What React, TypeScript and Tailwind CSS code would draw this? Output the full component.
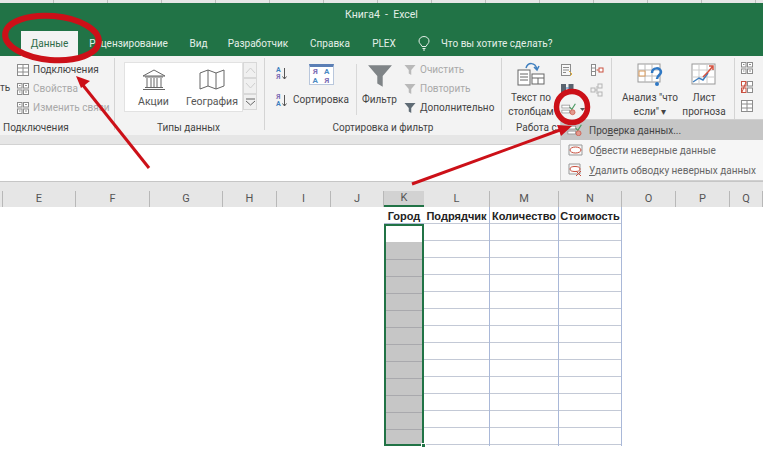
import type { ReactNode } from "react";

const TABS = [
  { label: "Рецензирование", w: "w-[101px]" },
  { label: "Вид", w: "w-[39px]" },
  { label: "Разработчик", w: "w-[80px]" },
  { label: "Справка", w: "w-[64px]" },
  { label: "PLEX", w: "w-[44px]" },
];

const HEADERS = [
  { label: "E", w: "w-[73px]" },
  { label: "F", w: "w-[74px]" },
  { label: "G", w: "w-[73px]" },
  { label: "H", w: "w-[54px]" },
  { label: "I", w: "w-[54px]" },
  { label: "J", w: "w-[53px]" },
];

const HEADERS_RIGHT = [
  { label: "L", w: "w-[66px]" },
  { label: "M", w: "w-[69px]" },
  { label: "N", w: "w-[63px]" },
  { label: "O", w: "w-[54px]" },
  { label: "P", w: "w-[54px]" },
  { label: "Q", w: "w-[33px]" },
];

const TABLE = [
  { title: "Подрядчик", w: "w-[66px]" },
  { title: "Количество", w: "w-[69px]" },
  { title: "Стоимость", w: "w-[63px]" },
];

const ROWS = Array.from({ length: 13 }, (_, i) => i);

function ValidationIcon({ size = 22 }: { size?: number }) {
  return (
    <svg className="block" width={size} height={size * 0.8} viewBox="0 0 22 18" fill="none">
      <rect x="1" y="3" width="11" height="4" fill="#fff" stroke="#8a8a8a" />
      <rect x="1" y="10" width="11" height="4" fill="#fff" stroke="#8a8a8a" />
      <path d="M12 6l3 3 5-8" stroke="#4c9a63" strokeWidth="1.6" />
      <circle cx="16" cy="13" r="3.5" fill="#e39a8f" stroke="#c9503f" />
    </svg>
  );
}

function SmallGlyph({ kind }: { kind: number }) {
  return (
    <svg className="block" width="14" height="14" viewBox="0 0 14 14" fill="none" stroke="#8c8c8c">
      {kind === 0 && (
        <>
          <rect x="1.5" y="1.5" width="9" height="11" fill="#f8f8f8" />
          <path d="M3 4.5h6M3 7h6M3 9.5h3" />
          <path d="M9 8l3 3-2 2" stroke="#e0b040" />
        </>
      )}
      {kind === 1 && (
        <>
          <rect x="1.5" y="3.5" width="4" height="8" fill="#59636e" stroke="#59636e" />
          <rect x="9" y="3.5" width="4" height="8" fill="#59636e" stroke="#59636e" />
          <path d="M6 7h3" stroke="#3f7fbf" />
        </>
      )}
      {kind === 2 && (
        <>
          <rect x="1.5" y="1.5" width="4" height="11" fill="#fff" />
          <path d="M1.5 5h4M1.5 8.5h4" />
          <path d="M6.5 7h2" stroke="#c9503f" />
          <rect x="9" y="5" width="4" height="4" fill="#fff" stroke="#c9503f" />
        </>
      )}
      {kind === 3 && (
        <>
          <rect x="1" y="5" width="4" height="4" stroke="#b5b5b5" />
          <rect x="8" y="1" width="4" height="4" stroke="#b5b5b5" />
          <rect x="8" y="9" width="4" height="4" stroke="#b5b5b5" />
          <path d="M5 7h2M7 3v8" stroke="#b5b5b5" />
        </>
      )}
      {kind === 4 && (
        <>
          <rect x="1.5" y="1.5" width="4.5" height="4.5" fill="#fff" />
          <rect x="7.5" y="1.5" width="5" height="4.5" fill="#fff" />
          <rect x="1.5" y="8" width="4.5" height="4.5" fill="#fff" />
          <rect x="7.5" y="8" width="5" height="4.5" fill="#fff" />
          <path d="M3 3.5h1.5M9 3.5h2M3 10h1.5M9 10h2" />
        </>
      )}
      {kind === 5 && (
        <>
          <rect x="1.5" y="1.5" width="4.5" height="4.5" fill="#fff" stroke="#c9503f" />
          <rect x="7.5" y="1.5" width="5" height="4.5" fill="#fff" />
          <rect x="1.5" y="8" width="4.5" height="4.5" fill="#fff" stroke="#c9503f" />
          <rect x="7.5" y="8" width="5" height="4.5" fill="#fff" />
          <path d="M2 12L6 2" stroke="#c9503f" />
        </>
      )}
      {kind === 6 && (
        <>
          <rect x="1.5" y="1.5" width="11" height="11" fill="#fff" />
          <path d="M7 1.5v11M1.5 5h11M1.5 9h11" />
        </>
      )}
    </svg>
  );
}

function FilterIcon({ size, color }: { size: number; color: string }) {
  return (
    <svg className="block" width={size} height={size} viewBox="0 0 24 24" fill={color}>
      <path d="M1 2h22L14.5 12v10l-5-3v-7z" />
    </svg>
  );
}

function SortGlyph({ top, bottom }: { top: string; bottom: string }) {
  return (
    <div className="flex h-[14px] items-center gap-[1px] text-[7px] font-bold leading-[7px]">
      <div className="flex flex-col items-center">
        <span className={top === "А" ? "text-[#3f7fbf]" : "text-[#7c6db5]"}>{top}</span>
        <span className={bottom === "А" ? "text-[#3f7fbf]" : "text-[#7c6db5]"}>{bottom}</span>
      </div>
      <svg className="block" width="5" height="12" viewBox="0 0 5 12" fill="none" stroke="#555">
        <path d="M2.5 0v11M0.5 8.500l2 2.500 2-2.500" />
      </svg>
    </div>
  );
}

function CommandLine({ icon, label, muted }: { icon: ReactNode; label: string; muted?: boolean }) {
  return (
    <div className={`flex h-[19px] items-center gap-[3px] whitespace-nowrap ${muted ? "text-[#a9a9a9]" : "text-[#444]"}`}>
      <span className="flex w-[15px] justify-center">{icon}</span>
      {label}
    </div>
  );
}

function Group({ w, label, children, labelClass }: { w: string; label: string; children: ReactNode; labelClass?: string }) {
  return (
    <div className={`${w} mb-[5px] mt-[2px] flex shrink-0 flex-col border-r border-[#d4d4d4]`}>
      <div className="flex h-[63px] shrink-0">{children}</div>
      <div className={`h-[14px] shrink-0 leading-[14px] text-[#444] ${labelClass ?? "text-center"}`}>{label}</div>
    </div>
  );
}

function ScrollButton({ d, dim }: { d: string; dim?: boolean }) {
  return (
    <div className="flex h-[16px] items-center justify-center border border-[#d8d8d8] bg-[#f0f0f0]">
      <svg className="block" width="11" height="8" viewBox="0 0 11 8" fill="none" stroke={dim ? "#cfcfcf" : "#666"}>
        <path d={d} />
      </svg>
    </div>
  );
}

export default function App() {
  return (
    <div className="relative h-[458px] w-[763px] overflow-hidden bg-white font-['Roboto',sans-serif] text-[10px]">
      {/* Полоска сверху */}
      <div className="flex h-[3px] bg-[#e6e6e6]">
        {Array.from({ length: 15 }, (_, i) => (
          <div key={i} className="h-full w-[54px] shrink-0 border-r border-[#bdbdbd]" />
        ))}
      </div>

      {/* Заголовок */}
      <div className="h-[28px] bg-[#217346] pt-[4px] text-center text-[10.5px] leading-[16px] text-[#e4efe8]">
        Книга4 &nbsp;-&nbsp; Excel
      </div>

      {/* Вкладки */}
      <div className="flex h-[25px] items-stretch bg-[#217346] text-[#e4efe8]">
        <div className="w-[21px]" />
        <div className="flex w-[57px] items-center justify-center bg-[#f3f3f3] text-[#2f6b49]">Данные</div>
        {TABS.map((t) => (
          <div key={t.label} className={`${t.w} flex items-center justify-center`}>
            {t.label}
          </div>
        ))}
        <div className="ml-[9px] flex w-[18px] items-center justify-center">
          <svg className="block" width="12" height="15" viewBox="0 0 12 15" fill="none" stroke="#e4efe8">
            <path d="M4 10.5C3 8 1 7.5 1 5a5 4.5 0 0 1 10 0c0 2.5-2 3-3 5.5zM4.5 12.5h3M5 14h2" />
          </svg>
        </div>
        <div className="ml-[8px] flex items-center whitespace-nowrap">Что вы хотите сделать?</div>
      </div>

      {/* Лента */}
      <div className="flex h-[79px] bg-[#f3f3f3]">
        <Group w="w-[115px]" label="Подключения" labelClass="pl-[3px]">
          <div className="flex w-[15px] items-center pb-[5px] text-[#444]">ть</div>
          <div className="pt-[2px]">
            <CommandLine label="Подключения" icon={<SmallGlyph kind={6} />} />
            <CommandLine label="Свойства" muted icon={<SmallGlyph kind={4} />} />
            <CommandLine label="Изменить связи" muted icon={<SmallGlyph kind={4} />} />
          </div>
        </Group>

        <Group w="w-[150px]" label="Типы данных" labelClass="text-center pr-[2px]">
          <div className="ml-[9px] mt-[4px] flex h-[50px] w-[119px] border border-[#e2e2e2] bg-white">
            <div className="flex w-[57px] flex-col items-center pt-[5px] text-[#555]">
              <svg className="block" width="26" height="23" viewBox="0 0 26 23" fill="none" stroke="#666">
                <path d="M2 8L13 2l11 6zM4 9h18M6 10v9M10 10v9M13 10v9M16 10v9M20 10v9M4 19.5h18M2 21.5h22" />
              </svg>
              <span className="mt-[3px] text-[10.5px]">Акции</span>
            </div>
            <div className="flex flex-1 flex-col items-center pt-[5px] text-[#555]">
              <svg className="block" width="26" height="23" viewBox="0 0 26 23" fill="none" stroke="#666">
                <path d="M1 5l8-3 8 3 8-3v16l-8 3-8-3-8 3zM9 2v16M17 5v16" />
              </svg>
              <span className="mt-[3px] text-[10.5px]">География</span>
            </div>
          </div>
          <div className="mt-[4px] flex w-[14px] flex-col">
            <ScrollButton dim d="M1 7l4.5-5L10 7" />
            <ScrollButton dim d="M1 1l4.5 5L10 1" />
            <ScrollButton d="M1 1h9M1 3l4.5 4L10 3" />
          </div>
        </Group>

        <Group w="w-[237px]" label="Сортировка и фильтр">
          <div className="ml-[11px] flex w-[15px] flex-col gap-[13px] pt-[9px]">
            <SortGlyph top="А" bottom="Я" />
            <SortGlyph top="Я" bottom="А" />
          </div>
          <div className="flex w-[60px] flex-col items-center pt-[6px] text-[#444]">
            <div className="grid h-[21px] w-[25px] grid-cols-2 border-x border-b border-t-[3px] border-x-[#b9c7dc] border-b-[#b9c7dc] border-t-[#5b7fb5] bg-white text-center text-[8px] font-bold leading-[9px] text-[#4d8bc4]">
              <span className="text-[#7c6db5]">Я</span>
              <span>А</span>
              <span>А</span>
              <span className="text-[#7c6db5]">Я</span>
            </div>
            <span className="mt-[7px] whitespace-nowrap">Сортировка</span>
          </div>
          <div className="my-[6px] ml-[5px] w-px bg-[#d8d8d8]" />
          <div className="flex w-[45px] flex-col items-center pt-[5px] text-[#444]">
            <FilterIcon size={26} color="#7f8487" />
            <span className="mt-[3px]">Фильтр</span>
          </div>
          <div className="pt-[2px]">
            <CommandLine label="Очистить" muted icon={<FilterIcon size={12} color="#b9b9b9" />} />
            <CommandLine label="Повторить" muted icon={<FilterIcon size={12} color="#b9b9b9" />} />
            <CommandLine label="Дополнительно" icon={<FilterIcon size={12} color="#5f6b75" />} />
          </div>
        </Group>

        <Group w="w-[110px]" label="Работа с" labelClass="pl-[14px]">
          <div className="flex w-[58px] flex-col items-center pt-[3px] text-center leading-[14px] text-[#444]">
            <svg className="block" width="28" height="25" viewBox="0 0 28 25" fill="none" stroke="#666">
              <rect x="1" y="9" width="12" height="15" fill="#fff" />
              <path d="M3 13h8M3 16h8M3 19h8" />
              <rect x="15" y="13" width="12" height="10" fill="#fff" />
              <path d="M15 17h12M21 17v6" />
              <path d="M9 7c2-6 9-6 11 1M17 6l3 3 2-4" stroke="#3f7fbf" strokeWidth="1.5" />
            </svg>
            <span className="mt-[5px] whitespace-nowrap">Текст по<br />столбцам</span>
          </div>
          <div className="flex w-[30px] flex-col pt-[5px]">
            <SmallGlyph kind={0} />
            <div className="mt-[4px]"><SmallGlyph kind={1} /></div>
            <div className="mt-[8px] flex items-center gap-[3px] pl-[1px]">
              <ValidationIcon size={16} />
              <svg className="block" width="5" height="3" viewBox="0 0 5 3" fill="#555"><path d="M0 0h5L2.5 3z" /></svg>
            </div>
          </div>
          <div className="flex w-[14px] flex-col pt-[5px]">
            <SmallGlyph kind={2} />
            <div className="mt-[6px]"><SmallGlyph kind={3} /></div>
          </div>
        </Group>

        <Group w="w-[123px]" label="">
          <div className="ml-[3px] flex w-[70px] flex-col items-center pt-[5px] text-center leading-[14px] text-[#444]">
            <svg className="block" width="26" height="24" viewBox="0 0 26 24" fill="none">
              <rect x="1" y="1" width="22" height="18" fill="#fff" stroke="#999" />
              <path d="M8 1v18M15 1v18M1 7h22M1 13h22" stroke="#bbb" />
              <rect x="2" y="8" width="6" height="5" fill="#fff" stroke="#d99a5b" />
              <path d="M15 10c0-6 9-6 9-1 0 3-4 3-4 7" stroke="#2f78c4" strokeWidth="2.5" />
              <circle cx="20" cy="21" r="2" fill="#2f78c4" />
            </svg>
            <span className="mt-[4px] whitespace-nowrap">Анализ "что<br />если" ▾</span>
          </div>
          <div className="flex w-[38px] flex-col items-center pt-[5px] text-center leading-[14px] text-[#444]">
            <svg className="block" width="26" height="24" viewBox="0 0 26 24" fill="none">
              <rect x="1" y="1" width="23" height="20" fill="#fff" stroke="#999" />
              <path d="M8 1v20M16 1v20M1 7h23M1 14h23" stroke="#ccc" />
              <path d="M2 19l6-4 4 2 5-7" stroke="#3f7fbf" strokeWidth="1.5" />
              <path d="M12 14l5-5 5-6M18 3h4v4" stroke="#d5513f" strokeWidth="1.5" />
            </svg>
            <span className="mt-[4px] whitespace-nowrap">Лист<br />прогноза</span>
          </div>
        </Group>

        <div className="flex flex-col gap-[5px] pl-[5px] pt-[5px]">
          <SmallGlyph kind={4} />
          <SmallGlyph kind={5} />
          <SmallGlyph kind={6} />
        </div>
      </div>

      <div className="h-[10px] border-b border-[#d2d2d2] bg-[#e6e6e6]" />

      {/* Строка формул */}
      <div className="h-[37px] border-b border-[#c6c6c6] bg-white" />

      {/* Заголовки столбцов */}
      <div className="flex h-[25px] bg-[#e6e6e6] pt-[9px] text-[11px] text-[#555]">
        <div className="w-[3px] border-r border-[#b8b8b8]" />
        {HEADERS.map((h) => (
          <div key={h.label} className={`${h.w} flex items-center justify-center border-r border-[#b8b8b8]`}>
            {h.label}
          </div>
        ))}
        <div className="flex w-[40px] items-center justify-center border-b-2 border-[#217346] bg-[#d2d2d2]">K</div>
        {HEADERS_RIGHT.map((h) => (
          <div key={h.label} className={`${h.w} flex items-center justify-center border-r border-[#b8b8b8]`}>
            {h.label}
          </div>
        ))}
      </div>

      {/* Таблица */}
      <div className="ml-[384px] flex w-[238px] font-['Liberation_Sans',sans-serif] text-[11px] font-bold text-[#222]">
        <div className="relative w-[40px]">
          <div className="flex h-[17px] items-center justify-center whitespace-nowrap border-b border-[#aebbd2] pt-[2px]">Город</div>
          <div className="border-2 border-[#217346]">
            {ROWS.map((r) => (
              <div
                key={r}
                className={`h-[17px] last:h-[14px] ${r === 0 ? "border-b border-[#c6c6c6] bg-white" : "border-b border-[#a9a9ad] bg-[#c6c6c6] last:border-b-0"}`}
              />
            ))}
          </div>
          <div className="absolute -bottom-[2px] -right-[2px] h-[5px] w-[5px] border border-white bg-[#217346]" />
        </div>
        {TABLE.map((c) => (
          <div key={c.title} className={`${c.w} border-r border-[#a9b8d8]`}>
            <div className="flex h-[17px] items-center justify-center whitespace-nowrap border-b border-[#c3c9d6] pt-[2px]">{c.title}</div>
            {ROWS.map((r) => (
              <div key={r} className="h-[17px] border-b border-[#c3c9d6]" />
            ))}
          </div>
        ))}
      </div>

      {/* Выпадающее меню */}
      <div className="absolute left-[560px] top-[119px] w-[203px] whitespace-nowrap border-y border-l border-[#d0d0d0] bg-[#f6f6f6] text-[#666]">
        <div className="flex h-[20px] items-center bg-[#c6c6c6] text-[#444]">
          <span className="flex w-[28px] justify-center"><ValidationIcon size={16} /></span>
          <span>Про<u>в</u>ерка данных...</span>
        </div>
        <div className="flex h-[20px] items-center">
          <span className="flex w-[28px] justify-center">
            <svg className="block" width="15" height="12" viewBox="0 0 15 12" fill="none" stroke="#c9503f">
              <path d="M1 1h13v10H1z" stroke="#999" />
              <ellipse cx="7.5" cy="6" rx="5.5" ry="3" fill="#fff" />
            </svg>
          </span>
          <span>О<u>б</u>вести неверные данные</span>
        </div>
        <div className="flex h-[20px] items-center">
          <span className="flex w-[28px] justify-center">
            <svg className="block" width="15" height="14" viewBox="0 0 15 14" fill="none" stroke="#c9503f">
              <path d="M1 1h11v10H1z" stroke="#999" />
              <ellipse cx="7" cy="6" rx="5" ry="2.5" fill="#fff" />
              <path d="M8 8l5 5M13 8l-5 5" />
            </svg>
          </span>
          <span><u>У</u>далить обводку неверных данных</span>
        </div>
      </div>

      {/* Пометки поверх скриншота */}
      <svg className="pointer-events-none absolute inset-0" width="763" height="458" viewBox="0 0 763 458" fill="none">
        <ellipse cx="52" cy="38" rx="47" ry="22" stroke="#cc1018" strokeWidth="6" transform="rotate(5 52 38)" />
        <circle cx="572" cy="107" r="15.5" stroke="#cc1018" strokeWidth="5.5" />
        <path d="M149 168L82 84" stroke="#cc1018" strokeWidth="3" />
        <path d="M76 76l14 5-9 7z" fill="#cc1018" />
        <path d="M412 184L560 130" stroke="#cc1018" strokeWidth="3" />
        <path d="M572 126l-11 10-4-11z" fill="#cc1018" />
      </svg>
    </div>
  );
}
